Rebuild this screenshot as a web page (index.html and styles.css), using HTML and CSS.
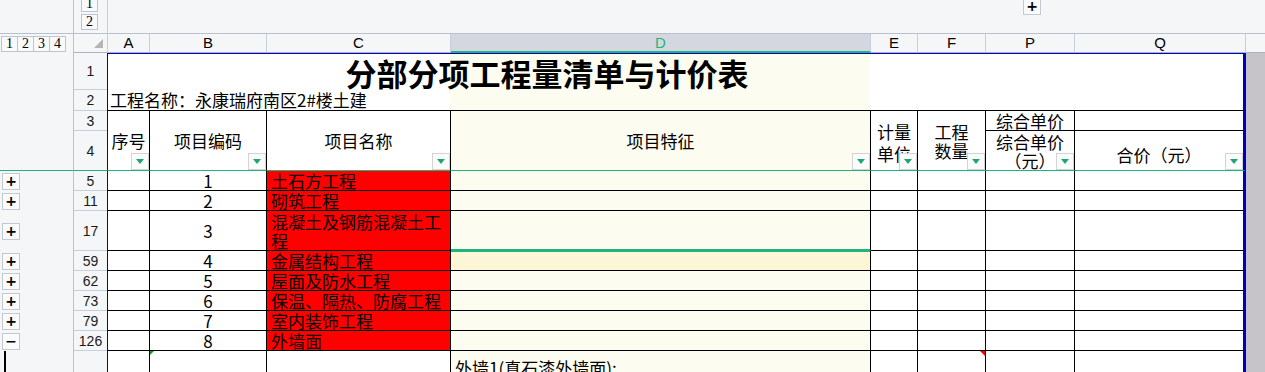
FILE: index.html
```html
<!DOCTYPE html>
<html lang="zh-CN">
<head>
  <meta charset="UTF-8">
  <title>分部分项工程量清单与计价表</title>
  <link rel="stylesheet" href="styles.css">
</head>
<body>

  <div class="topbar">
    <div class="tb-outline"></div>
    <div class="tb-corner">
      <span class="lvl">1</span>
      <span class="lvl">2</span>
    </div>
    <div class="tb-cols"><span class="tog tog-top">+</span></div>
  </div>

  <table class="sheet">
    <colgroup>
      <col class="w-ol"><col class="w-rh">
      <col class="w-a"><col class="w-b"><col class="w-c"><col class="w-d">
      <col class="w-e"><col class="w-f"><col class="w-p"><col class="w-q">
      <col class="w-rest">
    </colgroup>

    <tr class="h-19">
      <td class="ol"><div class="levels"><span class="lvl">1</span><span class="lvl">2</span><span class="lvl">3</span><span class="lvl">4</span></div></td>
      <td class="corner"><span class="tri"></span></td>
      <td class="ch first">A</td><td class="ch">B</td><td class="ch">C</td><td class="ch sel">D</td>
      <td class="ch">E</td><td class="ch">F</td><td class="ch">P</td><td class="ch">Q</td>
      <td class="ch rest-h"></td>
    </tr>

    <tr class="h-37">
      <td class="ol"></td><td class="rh">1</td>
      <td class="title" colspan="8">分部分项工程量清单与计价表</td>
      <td class="rest"></td>
    </tr>

    <tr class="h-21">
      <td class="ol"></td><td class="rh">2</td>
      <td class="project" colspan="8">工程名称：永康瑞府南区2#楼土建</td>
      <td class="rest"></td>
    </tr>

    <tr class="h-19">
      <td class="ol"></td><td class="rh">3</td>
      <td class="c a th frz" rowspan="2">序号<i class="flt"></i></td>
      <td class="c th frz" rowspan="2">项目编码<i class="flt"></i></td>
      <td class="c th frz" rowspan="2">项目名称<i class="flt"></i></td>
      <td class="c d th frz" rowspan="2">项目特征<i class="flt"></i></td>
      <td class="c th frz unit" rowspan="2">计量<br>单位<i class="flt"></i></td>
      <td class="c th frz" rowspan="2">工程<br>数量<i class="flt"></i></td>
      <td class="c th sub">综合单价</td>
      <td class="c q th"></td>
      <td class="rest"></td>
    </tr>

    <tr class="h-40">
      <td class="ol frz"></td><td class="rh frz">4</td>
      <td class="c th frz">综合单价<br>（元）<i class="flt"></i></td>
      <td class="c q th frz total">合价（元）<i class="flt"></i></td>
      <td class="rest"></td>
    </tr>

    <tr class="h-20">
      <td class="ol"><span class="tog">+</span></td><td class="rh">5</td>
      <td class="c a"></td><td class="c num">1</td><td class="c red">土石方工程</td><td class="c d"></td>
      <td class="c"></td><td class="c"></td><td class="c"></td><td class="c q"></td><td class="rest"></td>
    </tr>
    <tr class="h-20">
      <td class="ol"><span class="tog">+</span></td><td class="rh">11</td>
      <td class="c a"></td><td class="c num">2</td><td class="c red">砌筑工程</td><td class="c d"></td>
      <td class="c"></td><td class="c"></td><td class="c"></td><td class="c q"></td><td class="rest"></td>
    </tr>
    <tr class="h-40">
      <td class="ol"><span class="tog">+</span></td><td class="rh">17</td>
      <td class="c a"></td><td class="c num">3</td><td class="c red wrap">混凝土及钢筋混凝土工程</td><td class="c d above-sel"></td>
      <td class="c"></td><td class="c"></td><td class="c"></td><td class="c q"></td><td class="rest"></td>
    </tr>
    <tr class="h-20">
      <td class="ol"><span class="tog">+</span></td><td class="rh">59</td>
      <td class="c a"></td><td class="c num">4</td><td class="c red">金属结构工程</td><td class="c d cur"></td>
      <td class="c"></td><td class="c"></td><td class="c"></td><td class="c q"></td><td class="rest"></td>
    </tr>
    <tr class="h-20">
      <td class="ol"><span class="tog">+</span></td><td class="rh">62</td>
      <td class="c a"></td><td class="c num">5</td><td class="c red">屋面及防水工程</td><td class="c d"></td>
      <td class="c"></td><td class="c"></td><td class="c"></td><td class="c q"></td><td class="rest"></td>
    </tr>
    <tr class="h-20">
      <td class="ol"><span class="tog">+</span></td><td class="rh">73</td>
      <td class="c a"></td><td class="c num">6</td><td class="c red">保温、隔热、防腐工程</td><td class="c d"></td>
      <td class="c"></td><td class="c"></td><td class="c"></td><td class="c q"></td><td class="rest"></td>
    </tr>
    <tr class="h-20">
      <td class="ol"><span class="tog">+</span></td><td class="rh">79</td>
      <td class="c a"></td><td class="c num">7</td><td class="c red">室内装饰工程</td><td class="c d"></td>
      <td class="c"></td><td class="c"></td><td class="c"></td><td class="c q"></td><td class="rest"></td>
    </tr>
    <tr class="h-20">
      <td class="ol"><span class="tog">&minus;</span></td><td class="rh">126</td>
      <td class="c a"></td><td class="c num">8</td><td class="c red">外墙面</td><td class="c d"></td>
      <td class="c"></td><td class="c"></td><td class="c"></td><td class="c q"></td><td class="rest"></td>
    </tr>

    <tr class="h-60">
      <td class="ol top"><span class="bracket"></span></td><td class="rh"></td>
      <td class="c a"></td><td class="c mark-g"></td><td class="c"></td>
      <td class="c d desc">外墙1(真石漆外墙面):</td>
      <td class="c"></td><td class="c mark-r"></td><td class="c"></td><td class="c q"></td><td class="rest"></td>
    </tr>
  </table>

</body>
</html>
```

FILE: styles.css
```css
* {
  box-sizing: border-box;
}
body {
  margin: 0;
  background-color: #f5f6f8;
  overflow: hidden;
  font-family: "Noto Sans CJK SC", sans-serif;
  font-size: 17px;
  color: #000;
}

/* outline bar above the column headers */
.topbar {
  display: flex;
  height: 34px;
  border-bottom: 1px solid #b9c0ce;
  overflow: hidden;
}
.tb-outline {
  width: 74px;
  border-right: 1px solid #b9c0ce;
}
.tb-corner {
  width: 34px;
  border-right: 1px solid #c9cfda;
  display: flex;
  flex-direction: column;
  justify-content: flex-end;
  gap: 2px;
  padding: 0 0 3px 7px;
}
.tb-cols {
  flex: 1;
  padding-left: 915px;
}
.lvl {
  display: flex;
  align-items: center;
  justify-content: center;
  width: 17px;
  height: 16px;
  flex: none;
  border: 1px solid #bfc5d0;
  background-color: #f9fafb;
  font: 14px/14px "Liberation Serif", serif;
}
.tog {
  display: block;
  width: 18px;
  height: 17px;
  border: 1px solid #c3c8d2;
  background-color: #fafbfc;
  font: bold 14px/14px "DejaVu Sans", sans-serif;
  text-align: center;
}
.tog-top {
  height: 15px;
  border-top: none;
  line-height: 12px;
}

/* sheet */
.sheet {
  border-collapse: separate;
  border-spacing: 0;
  table-layout: fixed;
  width: 1265px;
}
.w-ol { width: 74px; }
.w-rh { width: 33px; }
.w-a { width: 43px; }
.w-b { width: 117px; }
.w-c { width: 184px; }
.w-d { width: 420px; }
.w-e { width: 47px; }
.w-f { width: 68px; }
.w-p { width: 89px; }
.w-q { width: 171px; }
.w-rest { width: 19px; }

.h-19 { height: 19px; }
.h-20 { height: 20px; }
.h-21 { height: 21px; }
.h-37 { height: 37px; }
.h-40 { height: 40px; }
.h-60 { height: 60px; }

td {
  padding: 0;
  line-height: 19px;
  white-space: nowrap;
}
.ol {
  background-color: #f5f6f8;
  border-right: 1px solid #b9c0ce;
  padding-left: 2px;
}
.ol.top {
  vertical-align: top;
}
.levels {
  display: flex;
  margin-left: -1px;
}
.levels .lvl {
  margin-right: -1px;
}
.corner {
  background-color: #f5f6f8;
  border-bottom: 1px solid #aab2c3;
  text-align: right;
  vertical-align: bottom;
  padding: 0 4px 4px 0;
  line-height: 0;
}
.tri {
  display: inline-block;
  width: 0;
  height: 0;
  border-left: 9px solid transparent;
  border-bottom: 9px solid #b5b5b5;
}
.ch {
  background-color: #f5f6f8;
  border-right: 1px solid #c9cfda;
  border-bottom: 1px solid #aab2c3;
  text-align: center;
  font: 15px/18px "Liberation Sans", sans-serif;
}
.ch.first {
  border-left: 1px solid #c9cfda;
}
.ch.sel {
  background-color: #d4d7df;
  color: #1fb47a;
  border-bottom: 2px solid #1fb47a;
  line-height: 17px;
}
.ch.rest-h {
  border-right: none;
}
.rh {
  background-color: #f5f6f8;
  border-bottom: 1px solid #c9cfda;
  text-align: center;
  font: 14px/16px "Liberation Sans", sans-serif;
  color: #1a1a1a;
}
.rest {
  background-color: #c6c4c9;
}

/* title rows */
.title,
.project {
  background: linear-gradient(to right, #fff 342px, #fcfcf0 342px, #fcfcf0 762px, #fff 762px);
  border-left: 1px solid #0000c0;
  border-right: 3px solid #0000c0;
}
.title {
  border-top: 1px solid #0000c0;
  padding: 2px 257px 0 0;
  text-align: center;
  font-size: 31px;
  font-weight: bold;
  line-height: 34px;
}
.project {
  border-bottom: 1px solid #000;
  padding-left: 2px;
  line-height: 20px;
}

/* data cells */
.c {
  background-color: #fff;
  border-right: 1px solid #000;
  border-bottom: 1px solid #000;
}
.c.a {
  border-left: 1px solid #0000c0;
}
.c.q {
  border-right: 3px solid #0000c0;
}
.c.d {
  background-color: #fcfcf0;
}
.num {
  text-align: center;
}
.red {
  background-color: #ff0000;
  padding-left: 4px;
}
.red.wrap {
  white-space: normal;
  vertical-align: top;
  padding-top: 1px;
}
.above-sel {
  border-bottom-color: #1fb47a;
  box-shadow: inset 0 -1px 0 #1fb47a;
}
.c.d.cur {
  background-color: #fbf7d6;
  box-shadow: inset 0 1px 0 #1fb47a;
}
.desc {
  vertical-align: top;
  padding: 7px 0 0 4px;
}

/* header cells of the list */
.th {
  position: relative;
  text-align: center;
  line-height: 19px;
}
.th.unit {
  line-height: 22px;
  padding-top: 4px;
}
.th.total {
  padding-top: 8px;
}
.frz {
  border-bottom: 1px solid #1fb47a;
}
.flt {
  position: absolute;
  right: 0;
  bottom: 0;
  width: 18px;
  height: 17px;
  border: 1px solid #d4d4d4;
  background-color: #fbfbfb;
}
.flt::after {
  content: "";
  position: absolute;
  left: 4px;
  top: 5px;
  border-left: 4px solid transparent;
  border-right: 4px solid transparent;
  border-top: 5px solid #1ea672;
}

/* markers */
.mark-g,
.mark-r {
  position: relative;
}
.mark-g::before {
  content: "";
  position: absolute;
  left: 0;
  top: 0;
  border-top: 4px solid #1a9a2a;
  border-right: 4px solid transparent;
}
.mark-r::before {
  content: "";
  position: absolute;
  right: 0;
  top: 0;
  border-top: 5px solid #ff0000;
  border-left: 5px solid transparent;
}
.bracket {
  display: block;
  width: 2px;
  height: 60px;
  margin-left: 2px;
  background-color: #000;
}
```
